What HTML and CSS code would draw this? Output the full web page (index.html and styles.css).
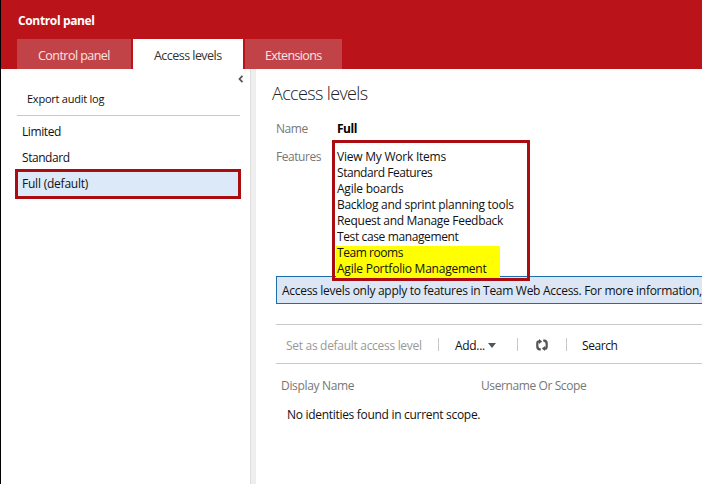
FILE: index.html
```html
<!DOCTYPE html>
<html lang="en">
<head>
<meta charset="utf-8">
<title>Control panel</title>
<link rel="stylesheet" href="styles.css">
</head>
<body>
<header class="header">
  <h1 class="brand"><span>Control panel</span></h1>
  <nav class="tabs">
    <a class="tab tab-home"><span>Control panel</span></a>
    <a class="tab tab-active"><span>Access levels</span></a>
    <a class="tab tab-ext"><span>Extensions</span></a>
  </nav>
</header>
<div class="workspace">
  <aside class="sidebar">
    <div class="collapse"><svg width="6" height="8" viewBox="0 0 6 8"><path d="M4.5 .8 1.5 4l3 3.2" fill="none" stroke="#555" stroke-width="1.8"/></svg></div>
    <div class="export"><span class="t-export">Export audit log</span></div>
    <ul class="levels">
      <li><span class="t-limited">Limited</span></li>
      <li><span class="t-standard">Standard</span></li>
      <li class="selected"><span class="t-default">Full (default)</span></li>
    </ul>
  </aside>
  <div class="splitter"></div>
  <main class="content">
    <h2 class="title"><span>Access levels</span></h2>
    <div class="field name-field"><span class="label t-name">Name</span><b class="t-full">Full</b></div>
    <div class="field features-field">
      <span class="label t-features">Features</span>
      <ul class="features">
        <li><span class="f1">View My Work Items</span></li>
        <li><span class="f2">Standard Features</span></li>
        <li><span class="f3">Agile boards</span></li>
        <li><span class="f4">Backlog and sprint planning tools</span></li>
        <li><span class="f5">Request and Manage Feedback</span></li>
        <li><span class="f6">Test case management</span></li>
        <li class="marked"><span class="f7">Team rooms</span></li>
        <li class="marked"><span class="f8">Agile Portfolio Management</span></li>
      </ul>
    </div>
    <div class="notice"><span class="t-notice">Access levels only apply to features in Team Web Access. For more information,</span></div>
    <div class="toolbar">
      <span class="disabled t-set">Set as default access level</span>
      <i class="sep sep-a"></i>
      <span class="add"><span class="t-add">Add...</span><i class="caret"></i></span>
      <i class="sep sep-b"></i>
      <svg class="refresh" width="12" height="12" viewBox="0 0 12 12" fill="#555"><path d="M4.800 11.500H3.500Q.2 11.200 .2 7.500V4.300Q.2 1.200 3 1.200V0L6.200 2.500 3 5V3.600Q2.400 3.600 2.400 4.800V7.300Q2.400 9.300 4.800 9.500zM7.200 .5H8.500Q11.800 .8 11.800 4.500V7.700Q11.800 10.800 9 10.800V12L5.800 9.500 9 7V8.400Q9.600 8.400 9.600 7.200V4.700Q9.600 2.700 7.200 2.500z"/></svg>
      <i class="sep sep-c"></i>
      <span class="t-search">Search</span>
    </div>
    <div class="columns"><span class="t-display">Display Name</span><span class="t-user">Username Or Scope</span></div>
    <p class="empty"><span class="t-empty">No identities found in current scope.</span></p>
  </main>
</div>
</body>
</html>
```
FILE: styles.css
```css
* { box-sizing: border-box; margin: 0; padding: 0; }
body { width: 702px; height: 484px; overflow: hidden; background: #fff; border-left: 1px solid #000; font: 12px/16px "Open Sans", sans-serif; letter-spacing: -.3px; color: #111; white-space: nowrap; display: flex; flex-direction: column; }
ul { list-style: none; }
.header { height: 69px; background: #ba141a; padding: 12px 0 0 16px; color: #fff; flex: none; }
.brand { font-size: 12px; line-height: 18px; font-weight: 700; height: 27px; padding-left: 1px; letter-spacing: -.36px; }
.tabs { display: flex; gap: 2px; height: 30px; }
.tab { background: #c24347; color: #f9e4e4; font-size: 12.5px; line-height: 33px; }
.tab-home { width: 114px; padding-left: 21px; letter-spacing: -.54px; }
.tab-active { width: 110px; padding-left: 21px; background: #fff; color: #333; letter-spacing: -.54px; }
.tab-ext { width: 97px; padding-left: 20px; letter-spacing: -.64px; }
.workspace { display: flex; flex: 1; }
.sidebar { width: 249px; flex: none; padding: 0 10px 0 14px; }
.collapse { height: 16px; display: flex; justify-content: flex-end; align-items: center; padding: 3px 0 0; margin-right: -4px; }
.export { margin: 0 0 0 2px; height: 31px; padding: 6px 0 0 10px; border-bottom: 1px solid #c8c8c8; font-size: 11px; line-height: 16px; letter-spacing: -.24px; }
.levels { margin: 3px -1px 0 0; }
.levels li { height: 26px; line-height: 26px; padding-left: 7px; }
.levels li.selected { height: 30px; line-height: 24px; margin-top: -2px; padding-left: 4px; border: 3px solid #aa0c12; background: #dbe9f9; }
.t-limited { letter-spacing: -.4px; }
.t-standard { letter-spacing: -.45px; }
.t-default { letter-spacing: -.22px; }
.splitter { width: 6px; flex: none; background: #eee; border-left: 1px solid #dedede; }
.content { flex: 1; min-width: 0; padding: 11px 0 0 20px; }
.title { height: 27px; line-height: 26px; margin-left: -4px; font-size: 18px; font-weight: 300; color: #222; letter-spacing: -.64px; }
.field { display: flex; }
.label { width: 56px; flex: none; color: #777; letter-spacing: -.45px; }
.name-field { height: 33px; line-height: 43px; }
.name-field b { margin-left: 5px; color: #000; letter-spacing: -.5px; }
.features-field .label { padding-top: 9px; }
.features { width: 198px; height: 141px; padding: 6px 0 0 1px; border: 3px solid #aa0c12; position: relative; z-index: 1; }
.features li { height: 16px; padding-left: 1px; }
.features .marked { width: 164px; background: linear-gradient(transparent 1px, #ff0 1px); }
.features .marked + .marked { height: 17px; background: #ff0; }
.f1, .f3, .f8 { letter-spacing: -.23px; }
.f2, .f7 { letter-spacing: -.45px; }
.f4 { letter-spacing: -.28px; }
.f6 { letter-spacing: -.38px; }
.notice { margin-top: -5px; height: 28px; line-height: 27px; padding-left: 5px; border: 1px solid #1c6fac; border-right: 0; background: #dce6f4; letter-spacing: -.29px; }
.toolbar { margin-top: 20px; height: 40px; border: solid #c8c8c8; border-width: 1px 0; display: flex; align-items: center; padding: 3px 0 0 10px; }
.disabled { color: #999; width: 152px; }
.sep { width: 1px; height: 13px; background: #c8c8c8; margin-top: -2px; }
.add { display: flex; align-items: center; margin-left: 16px; width: 62px; }
.t-add { width: 33px; }
.caret { border: solid transparent; border-width: 5px 4px 0; border-top-color: #555; }
.refresh { margin: -2px 18px 0 18px; }
.t-search { margin-left: 15px; letter-spacing: -.42px; }
.columns { height: 44px; line-height: 44px; display: flex; padding-left: 5px; color: #777; letter-spacing: -.33px; }
.t-display { width: 200px; }
.t-user { letter-spacing: -.4px; }
.empty { padding-left: 11px; line-height: 16px; margin-top: -1px; }
```
